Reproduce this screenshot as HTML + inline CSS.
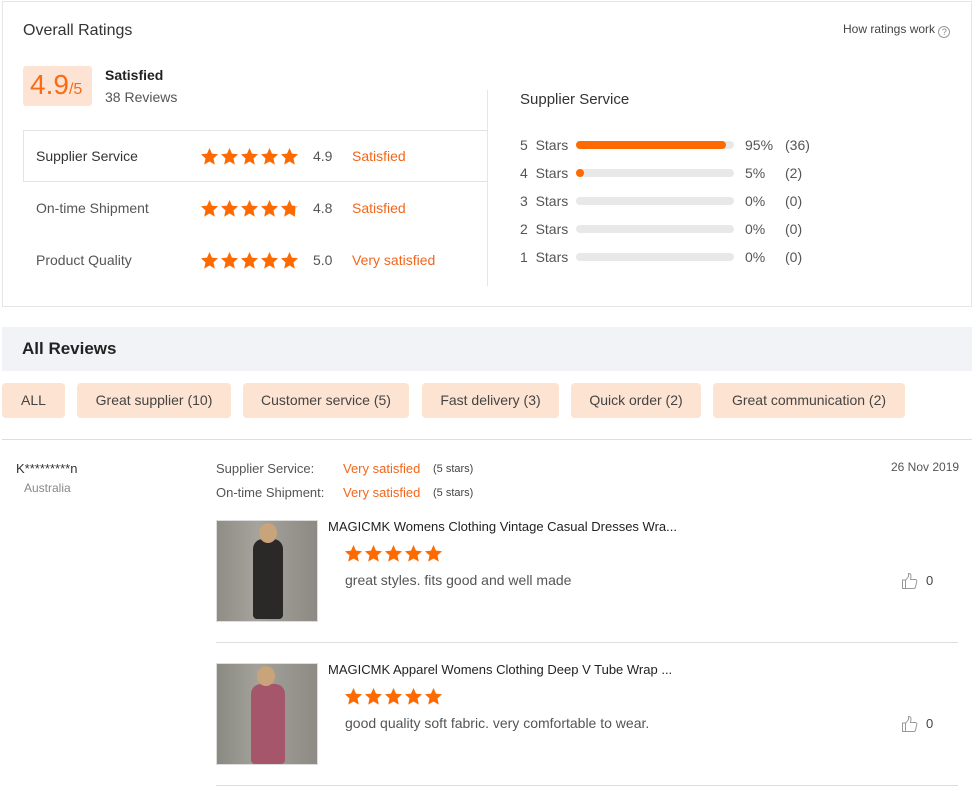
<!DOCTYPE html>
<html><head><meta charset="utf-8"><style>
*{margin:0;padding:0;box-sizing:border-box}
body{width:975px;height:790px;background:#fff;font-family:"Liberation Sans",Arial,sans-serif;color:#333;position:relative;overflow:hidden}
.a{position:absolute;white-space:nowrap}
.o{color:#f2661b}
.st{position:absolute;display:flex;gap:1px}
.st svg{width:19px;height:19px}
.bar{position:absolute;left:576px;width:158px;height:8px;border-radius:4px;background:#e8e8e8}
.bar i{display:block;height:8px;border-radius:4px;background:#ff6a00}
.chip{position:absolute;top:383px;height:35px;background:#fde3d2;border-radius:4px;font-size:14px;color:#444;line-height:35px;text-align:center}
.g{color:#555;font-size:14px}
</style></head><body>
<svg width="0" height="0" style="position:absolute"><defs><symbol id="s" viewBox="0 0 20 20"><polygon fill="#ff6a00" points="10,1 12.6,7 19,7.6 14.2,12 15.6,18.6 10,15.2 4.4,18.6 5.8,12 1,7.6 7.4,7"/></symbol>
<symbol id="h" viewBox="0 0 20 20"><polygon fill="#ccc" points="10,1 12.6,7 19,7.6 14.2,12 15.6,18.6 10,15.2 4.4,18.6 5.8,12 1,7.6 7.4,7"/><polygon fill="#ff6a00" points="10,1 12.6,7 16,7.3 16,14 15.6,18.6 10,15.2 4.4,18.6 5.8,12 1,7.6 7.4,7"/></symbol></defs></svg>

<div class="a" style="left:2px;top:1px;width:970px;height:306px;border:1px solid #e6e6e6"></div>
<div class="a" style="left:23px;top:22px;font-size:16px;color:#333">Overall Ratings</div>
<div class="a" style="left:843px;top:22px;font-size:12px;color:#444;line-height:14px">How ratings work <span style="display:inline-block;width:12px;height:12px;border:1px solid #999;border-radius:50%;font-size:9px;line-height:10px;text-align:center;color:#888;vertical-align:-2px">?</span></div>
<div class="a" style="left:23px;top:66px;width:69px;height:40px;background:#fde3d3;border-radius:3px"></div>
<div class="a o" style="left:30px;top:69px;font-size:28px;color:#f96b14">4.9<span style="font-size:16px">/5</span></div>
<div class="a" style="left:105px;top:67px;font-size:14px;font-weight:bold;color:#222">Satisfied</div>
<div class="a g" style="left:105px;top:89px">38 Reviews</div>
<div class="a" style="left:487px;top:90px;width:1px;height:196px;background:#e6e6e6"></div>
<div class="a" style="left:23px;top:130px;width:465px;height:52px;border:1px solid #e3e3e3;border-right:none"></div>

<div class="a" style="left:36px;top:148px;font-size:14px;color:#333">Supplier Service</div>
<div class="st" style="left:200px;top:147px"><svg><use href="#s"/></svg><svg><use href="#s"/></svg><svg><use href="#s"/></svg><svg><use href="#s"/></svg><svg><use href="#s"/></svg></div>
<div class="a g" style="left:313px;top:148px">4.9</div><div class="a o" style="left:352px;top:148px;font-size:14px">Satisfied</div>

<div class="a g" style="left:36px;top:200px">On-time Shipment</div>
<div class="st" style="left:200px;top:199px"><svg><use href="#s"/></svg><svg><use href="#s"/></svg><svg><use href="#s"/></svg><svg><use href="#s"/></svg><svg><use href="#h"/></svg></div>
<div class="a g" style="left:313px;top:200px">4.8</div><div class="a o" style="left:352px;top:200px;font-size:14px">Satisfied</div>

<div class="a g" style="left:36px;top:252px">Product Quality</div>
<div class="st" style="left:200px;top:251px"><svg><use href="#s"/></svg><svg><use href="#s"/></svg><svg><use href="#s"/></svg><svg><use href="#s"/></svg><svg><use href="#s"/></svg></div>
<div class="a g" style="left:313px;top:252px">5.0</div><div class="a o" style="left:352px;top:252px;font-size:14px">Very satisfied</div>

<div class="a" style="left:520px;top:91px;font-size:15px;color:#333">Supplier Service</div>
<div class="a g" style="left:520px;top:137px">5&nbsp; Stars</div><div class="bar" style="top:141px"><i style="width:150px"></i></div><div class="a g" style="left:745px;top:137px">95%</div><div class="a g" style="left:785px;top:137px">(36)</div>
<div class="a g" style="left:520px;top:165px">4&nbsp; Stars</div><div class="bar" style="top:169px"><i style="width:8px"></i></div><div class="a g" style="left:745px;top:165px">5%</div><div class="a g" style="left:785px;top:165px">(2)</div>
<div class="a g" style="left:520px;top:193px">3&nbsp; Stars</div><div class="bar" style="top:197px"></div><div class="a g" style="left:745px;top:193px">0%</div><div class="a g" style="left:785px;top:193px">(0)</div>
<div class="a g" style="left:520px;top:221px">2&nbsp; Stars</div><div class="bar" style="top:225px"></div><div class="a g" style="left:745px;top:221px">0%</div><div class="a g" style="left:785px;top:221px">(0)</div>
<div class="a g" style="left:520px;top:249px">1&nbsp; Stars</div><div class="bar" style="top:253px"></div><div class="a g" style="left:745px;top:249px">0%</div><div class="a g" style="left:785px;top:249px">(0)</div>

<div class="a" style="left:2px;top:327px;width:970px;height:44px;background:#f2f3f7"></div>
<div class="a" style="left:22px;top:339px;font-size:17px;font-weight:bold;color:#222">All Reviews</div>
<div class="chip" style="left:2px;width:63px">ALL</div>
<div class="chip" style="left:77px;width:154px">Great supplier (10)</div>
<div class="chip" style="left:243px;width:166px">Customer service (5)</div>
<div class="chip" style="left:422px;width:137px">Fast delivery (3)</div>
<div class="chip" style="left:571px;width:130px">Quick order (2)</div>
<div class="chip" style="left:713px;width:192px">Great communication (2)</div>
<div class="a" style="left:2px;top:439px;width:970px;height:1px;background:#ddd"></div>

<div class="a" style="left:16px;top:461px;font-size:13px;color:#333">K*********n</div>
<div class="a" style="left:24px;top:481px;font-size:12px;color:#888">Australia</div>
<div class="a" style="left:216px;top:461px;font-size:13px;color:#555">Supplier Service:</div>
<div class="a o" style="left:343px;top:461px;font-size:13px">Very satisfied</div>
<div class="a" style="left:433px;top:463px;font-size:11px;color:#444">(5 stars)</div>
<div class="a" style="left:216px;top:485px;font-size:13px;color:#555">On-time Shipment:</div>
<div class="a o" style="left:343px;top:485px;font-size:13px">Very satisfied</div>
<div class="a" style="left:433px;top:487px;font-size:11px;color:#444">(5 stars)</div>
<div class="a" style="left:891px;top:460px;font-size:12px;color:#555">26 Nov 2019</div>

<div class="a" style="left:216px;top:520px;width:102px;height:102px;border:1px solid #ddd;background:linear-gradient(90deg,#8f8d86,#a5a39c 40%,#8c8a83);overflow:hidden"><div style="position:absolute;left:36px;top:18px;width:30px;height:80px;background:#2a2928;border-radius:10px 10px 4px 4px"></div><div style="position:absolute;left:42px;top:2px;width:18px;height:20px;background:#c9a47a;border-radius:50%"></div></div>
<div class="a" style="left:328px;top:519px;font-size:13px;color:#222">MAGICMK Womens Clothing Vintage Casual Dresses Wra...</div>
<div class="st" style="left:344px;top:544px"><svg><use href="#s"/></svg><svg><use href="#s"/></svg><svg><use href="#s"/></svg><svg><use href="#s"/></svg><svg><use href="#s"/></svg></div>
<div class="a g" style="left:345px;top:572px;font-size:14px">great styles. fits good and well made</div>
<div class="a" style="left:901px;top:572px"><svg width="18" height="18" viewBox="0 0 18 18" fill="none" stroke="#999" stroke-width="1"><path d="M1.5 8h3v8.5h-3z M4.5 8.5l3-4V1.5c1.5 0 2.5 1 2.5 2.5l-.5 3.5h5c1 0 1.5 1 1.3 2l-1.3 5.5c-.2.8-.8 1.5-1.800 1.5H4.5"/></svg></div>
<div class="a" style="left:926px;top:573px;font-size:13px;color:#444">0</div>
<div class="a" style="left:216px;top:642px;width:742px;height:1px;background:#ddd"></div>

<div class="a" style="left:216px;top:663px;width:102px;height:102px;border:1px solid #ddd;background:linear-gradient(90deg,#8a8a82,#a3a29a 40%,#8d8b84);overflow:hidden"><div style="position:absolute;left:34px;top:20px;width:34px;height:80px;background:#a5566a;border-radius:10px 10px 4px 4px"></div><div style="position:absolute;left:40px;top:2px;width:18px;height:20px;background:#c9a47a;border-radius:50%"></div></div>
<div class="a" style="left:328px;top:662px;font-size:13px;color:#222">MAGICMK Apparel Womens Clothing Deep V Tube Wrap ...</div>
<div class="st" style="left:344px;top:687px"><svg><use href="#s"/></svg><svg><use href="#s"/></svg><svg><use href="#s"/></svg><svg><use href="#s"/></svg><svg><use href="#s"/></svg></div>
<div class="a g" style="left:345px;top:715px;font-size:14px">good quality soft fabric. very comfortable to wear.</div>
<div class="a" style="left:901px;top:715px"><svg width="18" height="18" viewBox="0 0 18 18" fill="none" stroke="#999" stroke-width="1"><path d="M1.5 8h3v8.5h-3z M4.5 8.5l3-4V1.5c1.5 0 2.5 1 2.5 2.5l-.5 3.5h5c1 0 1.5 1 1.3 2l-1.3 5.5c-.2.8-.8 1.5-1.8 1.5H4.5"/></svg></div>
<div class="a" style="left:926px;top:716px;font-size:13px;color:#444">0</div>
<div class="a" style="left:216px;top:785px;width:742px;height:1px;background:#ddd"></div>
</body></html>
